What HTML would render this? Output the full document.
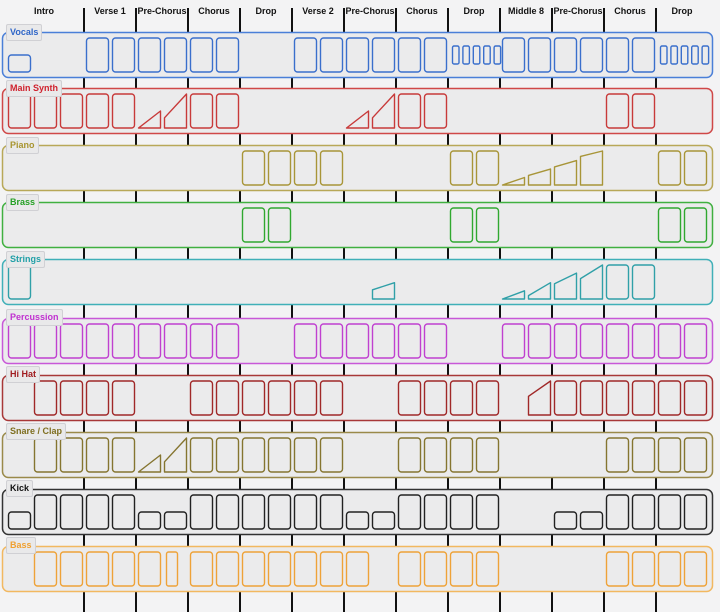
<!DOCTYPE html>
<html><head><meta charset="utf-8">
<style>
html,body{margin:0;padding:0;background:#f3f3f4;width:720px;height:612px;overflow:hidden;font-family:"Liberation Sans",Arial,sans-serif;}
#wrap{position:relative;width:720px;height:612px;}
svg{position:absolute;left:0;top:0;}
.hd{position:absolute;top:6px;font-weight:bold;font-size:9px;color:#111;text-align:center;}
.lb{position:absolute;left:6px;height:15px;line-height:15px;padding:0 3px;font-weight:bold;font-size:9px;background:#e9e9ea;border:1px solid #d0d0d4;border-radius:2px;}
</style></head><body><div id="wrap">
<svg id="s" width="720" height="612" xmlns="http://www.w3.org/2000/svg"></svg>
<div class="hd" style="left:4px;width:80px">Intro</div>
<div class="hd" style="left:84px;width:52px">Verse 1</div>
<div class="hd" style="left:136px;width:52px">Pre-Chorus</div>
<div class="hd" style="left:188px;width:52px">Chorus</div>
<div class="hd" style="left:240px;width:52px">Drop</div>
<div class="hd" style="left:292px;width:52px">Verse 2</div>
<div class="hd" style="left:344px;width:52px">Pre-Chorus</div>
<div class="hd" style="left:396px;width:52px">Chorus</div>
<div class="hd" style="left:448px;width:52px">Drop</div>
<div class="hd" style="left:500px;width:52px">Middle 8</div>
<div class="hd" style="left:552px;width:52px">Pre-Chorus</div>
<div class="hd" style="left:604px;width:52px">Chorus</div>
<div class="hd" style="left:656px;width:52px">Drop</div>
<div class="lb" style="top:24px;color:#2f66c8">Vocals</div>
<div class="lb" style="top:80px;color:#d0222e">Main Synth</div>
<div class="lb" style="top:137px;color:#a89530">Piano</div>
<div class="lb" style="top:194px;color:#25a025">Brass</div>
<div class="lb" style="top:251px;color:#22a0a8">Strings</div>
<div class="lb" style="top:309px;color:#c030d0">Percussion</div>
<div class="lb" style="top:366px;color:#a01c20">Hi Hat</div>
<div class="lb" style="top:423px;color:#7f6f20">Snare / Clap</div>
<div class="lb" style="top:480px;color:#111">Kick</div>
<div class="lb" style="top:537px;color:#f0a030">Bass</div>
</div>
<script>
var s=document.getElementById('s'),h='';
for(var k=0;k<12;k++){h+='<rect x="'+(83+52*k)+'" y="8" width="2" height="604" fill="#111"/>';}
function R(a){return a;}
var tracks=[
 {t:32,c:'#3a6fcc',b:'#4a7fd8',p:'s0;f3-8;f11-16;v17-18;f19-24;v25-26'},
 {t:88,c:'#c83a3a',b:'#d04848',p:'f0-4;r5:0,0.5;r6:0.3,1;f7-8;r13:0,0.5;r14:0.3,1;f15-16;f23-24'},
 {t:145,c:'#a89538',b:'#b8a858',p:'f9-12;f17-18;r19:0,0.22;r20:0.28,0.47;r21:0.53,0.72;r22:0.84,1;f25-26'},
 {t:202,c:'#30a830',b:'#40b040',p:'f9-10;f17-18;f25-26'},
 {t:259,c:'#30a0a8',b:'#40b0b8',p:'f0;r14:0.27,0.48;r19:0,0.24;r20:0.1,0.48;r21:0.45,0.76;r22:0.6,1;f23-24'},
 {t:318,c:'#c040d0',b:'#c858d8',p:'f0-8;f11-16;f19-26'},
 {t:375,c:'#a02828',b:'#a83838',p:'f1-4;f7-12;f15-18;r20:0.55,1;f21-26'},
 {t:432,c:'#857530',b:'#9a8a4a',p:'f1-4;r5:0,0.5;r6:0.3,1;f7-12;f15-18;f23-26'},
 {t:489,c:'#222',b:'#333',p:'s0;f1-4;s5-6;f7-12;s13-14;f15-18;s21-22;f23-26'},
 {t:546,c:'#eea238',b:'#f2b860',p:'f1-5;n6;f7-13;f15-18;f23-26'}
];
tracks.forEach(function(T){
 h+='<rect x="2.5" y="'+(T.t+0.5)+'" width="710" height="45" rx="6" fill="#ebebec" stroke="'+T.b+'" stroke-width="1.5"/>';
 var top=T.t+6,bot=T.t+40,H=bot-top;
 T.p.split(';').forEach(function(seg){
  var ty=seg[0],r=seg.slice(1),st='fill="none" stroke="'+T.c+'" stroke-width="1.4" stroke-linejoin="round"';
  if(ty=='r'){var pr=r.split(':'),i=+pr[0],v=pr[1].split(','),x=8+26*i+0.5,x2=x+22;
   var yl=bot-H*v[0],yr=bot-H*v[1];
   h+='<path d="M'+x+' '+bot+' L'+x+' '+yl+' L'+x2+' '+yr+' L'+x2+' '+bot+' Z" '+st+'/>';return;}
  var ab=r.split('-'),a=+ab[0],b=ab.length>1?+ab[1]:a;
  for(var i=a;i<=b;i++){var x=8+26*i+0.5;
   if(ty=='f')h+='<rect x="'+x+'" y="'+top+'" width="22" height="'+H+'" rx="3" '+st+'/>';
   if(ty=='s')h+='<rect x="'+x+'" y="'+(bot-17)+'" width="22" height="17" rx="3" '+st+'/>';
   if(ty=='n')h+='<rect x="'+(x+2)+'" y="'+top+'" width="11" height="'+H+'" rx="2" '+st+'/>';
  }
  if(ty=='v'){var x0=8+26*a+2.5;for(var j=0;j<5;j++)h+='<rect x="'+(x0+j*10.4)+'" y="'+(T.t+14)+'" width="6.5" height="18" rx="1.5" '+st+'/>';}
 });
});
s.innerHTML=h;
</script>
</body></html>
